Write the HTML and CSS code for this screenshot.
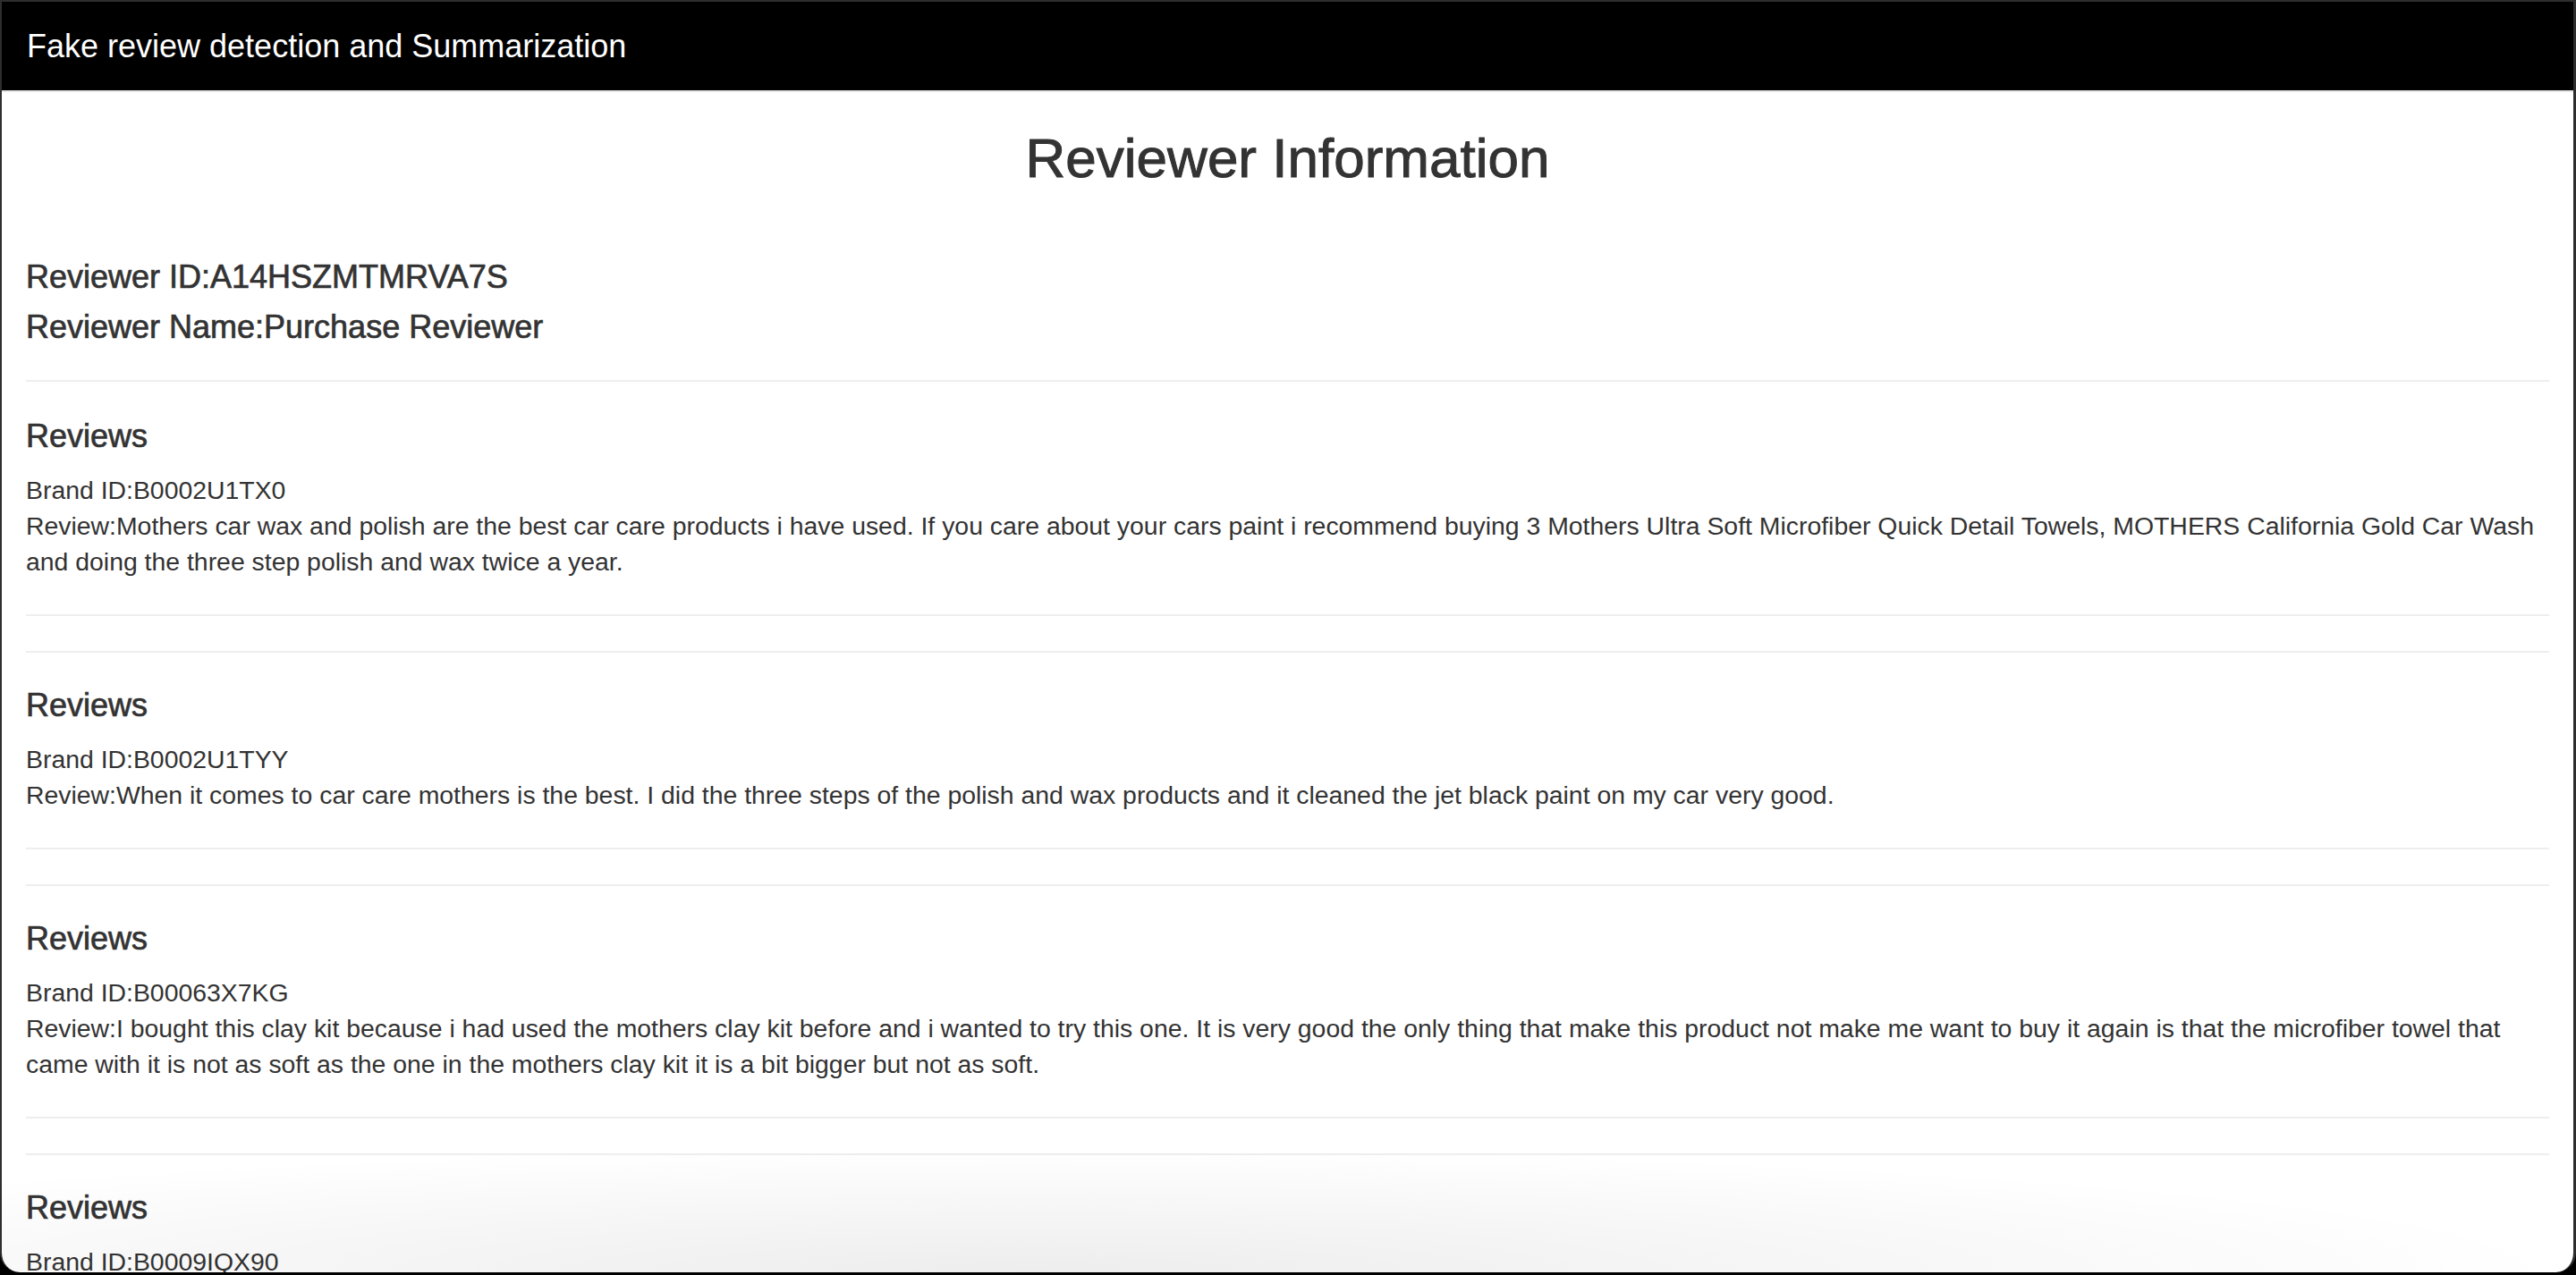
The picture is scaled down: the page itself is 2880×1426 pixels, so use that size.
FILE: index.html
```html
<!DOCTYPE html>
<html>
<head>
<meta charset="utf-8">
<link rel="stylesheet" href="styles.css">
</head>
<body>
<div class="window">
  <nav class="navbar"><span class="brand">Fake review detection and Summarization</span></nav>
  <main class="container">
    <h1 class="title">Reviewer Information</h1>
    <h4 class="info first">Reviewer ID:A14HSZMTMRVA7S</h4>
    <h4 class="info">Reviewer Name:Purchase Reviewer</h4>
    <hr class="top">
    <section class="review">
      <h4>Reviews</h4>
      <div class="line">Brand ID:B0002U1TX0</div>
      <div class="line">Review:Mothers car wax and polish are the best car care products i have used. If you care about your cars paint i recommend buying 3 Mothers Ultra Soft Microfiber Quick Detail Towels, MOTHERS California Gold Car Wash and doing the three step polish and wax twice a year.</div>
    </section>
    <hr><hr>
    <section class="review">
      <h4>Reviews</h4>
      <div class="line">Brand ID:B0002U1TYY</div>
      <div class="line">Review:When it comes to car care mothers is the best. I did the three steps of the polish and wax products and it cleaned the jet black paint on my car very good.</div>
    </section>
    <hr><hr>
    <section class="review">
      <h4>Reviews</h4>
      <div class="line">Brand ID:B00063X7KG</div>
      <div class="line">Review:I bought this clay kit because i had used the mothers clay kit before and i wanted to try this one. It is very good the only thing that make this product not make me want to buy it again is that the microfiber towel that came with it is not as soft as the one in the mothers clay kit it is a bit bigger but not as soft.</div>
    </section>
    <hr><hr>
    <section class="review">
      <h4>Reviews</h4>
      <div class="line">Brand ID:B0009IQX90</div>
      <div class="line">Review:Great product.</div>
    </section>
  </main>
  <div class="shade"></div>
</div>
</body>
</html>
```
FILE: styles.css
```css
html, body {
  margin: 0;
  padding: 0;
  height: 100%;
  overflow: hidden;
}
body {
  background: #000;
  font-family: "Liberation Sans", Arial, sans-serif;
  color: #333;
}
.window {
  position: relative;
  height: 1423px;
  margin: 0;
  border-top: 2px solid #2e2e2e;
  border-left: 2px solid #2e2e2e;
  border-right: 3px solid #2e2e2e;
  box-sizing: border-box;
  background: #fff;
  border-radius: 0 0 22px 22px;
  overflow: hidden;
}
.navbar {
  height: 99px;
  background: #000;
  border-bottom: 2px solid #e6e6e6;
  display: flex;
  align-items: center;
  padding-left: 28px;
}
.brand {
  color: #fff;
  font-size: 36px;
  line-height: 40px;
}
.container {
  padding: 0 27px;
}
.title {
  text-align: center;
  font-size: 62px;
  font-weight: 500;
  line-height: 68px;
  margin: 40px 0 0;
  -webkit-text-stroke: 1px #333;
}
h4 {
  font-size: 36px;
  font-weight: 500;
  line-height: 40px;
  margin: 20px 0;
  -webkit-text-stroke: 0.7px #333;
}
.info.first {
  margin-top: 79px;
  margin-bottom: 16px;
}
.info {
  margin-top: 16px;
  margin-bottom: 0;
}
hr {
  border: 0;
  border-top: 2px solid #eee;
  margin: 39px 0;
}
hr.top {
  margin-bottom: 41px;
}
.review h4 {
  margin: 0 0 20px;
}
.line {
  font-size: 28.4px;
  line-height: 40px;
}
.shade {
  position: absolute;
  left: 0;
  right: 0;
  bottom: 0;
  height: 140px;
  background: radial-gradient(ellipse 60% 100% at 40% 100%, rgba(0,0,0,0.07), rgba(0,0,0,0) 100%);
  pointer-events: none;
}
```
